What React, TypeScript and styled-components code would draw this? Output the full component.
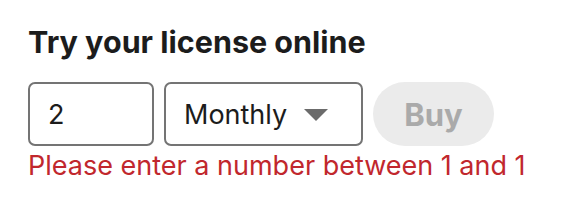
import React from "react";
import styled, { createGlobalStyle } from "styled-components";

const Global = createGlobalStyle`
  html, body { margin: 0; padding: 0; background: #ffffff; }
  body { font-family: Inter, "Noto Sans", sans-serif; color: #1c1c1c; }
`;

const Wrap = styled.div`
  padding: 24px 28px 0 28px;
  display: flex;
  flex-direction: column;
`;

const Title = styled.h2`
  margin: 0;
  font-size: 30.5px;
  line-height: 36px;
  font-weight: 700;
  color: #1c1c1c;
`;

const Row = styled.div`
  display: flex;
  align-items: center;
  gap: 10px;
  margin-top: 22px;
`;

const Field = styled.div<{ $w: number }>`
  box-sizing: border-box;
  width: ${(p) => p.$w}px;
  height: 64px;
  border: 2px solid #747474;
  border-radius: 7px;
  display: flex;
  align-items: center;
  padding: 0 33px 0 18px;
  font-size: 27px;
  color: #1c1c1c;
`;

const Label = styled.span`
  flex: 1;
`;

const Caret = styled.svg`
  width: 24px;
  height: 12px;
  margin-top: 1px;
`;

const BuyButton = styled.button`
  box-sizing: border-box;
  width: 121px;
  height: 64px;
  border: none;
  border-radius: 32px;
  background: #ebebeb;
  color: #aaaaaa;
  font-family: Inter, "Noto Sans", sans-serif;
  font-size: 31px;
  font-weight: 700;
  padding: 0;
`;

const ErrorText = styled.div`
  margin-top: 4px;
  font-size: 27px;
  line-height: 32px;
  color: #c1272d;
`;

export default function App() {
  return (
    <>
      <Global />
      <Wrap>
        <Title>Try your license online</Title>
        <Row>
          <Field $w={126}>2</Field>
          <Field $w={199}>
            <Label>Monthly</Label>
            <Caret viewBox="0 0 24 12">
              <polygon points="0,0 24,0 12,12" fill="#6b6b6b" />
            </Caret>
          </Field>
          <BuyButton disabled>Buy</BuyButton>
        </Row>
        <ErrorText>Please enter a number between 1 and 1</ErrorText>
      </Wrap>
    </>
  );
}
